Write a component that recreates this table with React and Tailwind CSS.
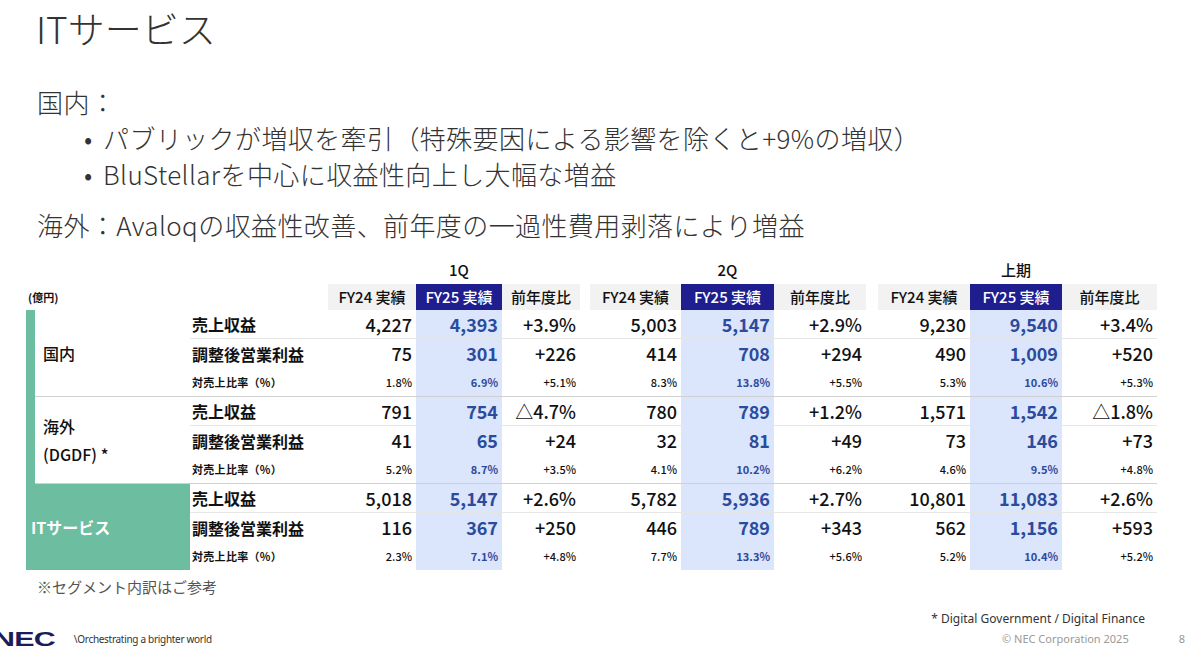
import React from 'react';

const COLS = 'grid grid-cols-[138px_88px_86px_78px_10px_91px_93px_92px_12px_92px_92px_95px]';
const HEAD_COLS = 'grid grid-cols-[164px_138px_88px_86px_78px_10px_91px_93px_92px_12px_92px_92px_95px]';

const sections = [
    {
        label: ['国内'],
        rows: [
            ['売上収益', ['4,227', '4,393', '+3.9%'], ['5,003', '5,147', '+2.9%'], ['9,230', '9,540', '+3.4%']],
            ['調整後営業利益', ['75', '301', '+226'], ['414', '708', '+294'], ['490', '1,009', '+520']],
            ['対売上比率（%）', ['1.8%', '6.9%', '+5.1%'], ['8.3%', '13.8%', '+5.5%'], ['5.3%', '10.6%', '+5.3%']],
        ],
    },
    {
        label: ['海外', '(DGDF) *'],
        rows: [
            ['売上収益', ['791', '754', '△4.7%'], ['780', '789', '+1.2%'], ['1,571', '1,542', '△1.8%']],
            ['調整後営業利益', ['41', '65', '+24'], ['32', '81', '+49'], ['73', '146', '+73']],
            ['対売上比率（%）', ['5.2%', '8.7%', '+3.5%'], ['4.1%', '10.2%', '+6.2%'], ['4.6%', '9.5%', '+4.8%']],
        ],
    },
    {
        label: ['ITサービス'],
        total: true,
        rows: [
            ['売上収益', ['5,018', '5,147', '+2.6%'], ['5,782', '5,936', '+2.7%'], ['10,801', '11,083', '+2.6%']],
            ['調整後営業利益', ['116', '367', '+250'], ['446', '789', '+343'], ['562', '1,156', '+593']],
            ['対売上比率（%）', ['2.3%', '7.1%', '+4.8%'], ['7.7%', '13.3%', '+5.6%'], ['5.2%', '10.4%', '+5.2%']],
        ],
    },
];

function HeadCell({ dark, children }) {
    return (
        <div className={`flex items-center justify-center h-full text-[15px] font-medium ${dark ? 'bg-[#1e1e8f] text-white' : 'bg-[#f2f2f2] text-[#111]'}`}>
            {children}
        </div>
    );
}

function Values({ vals, small }) {
    const size = small ? 'text-[11px]' : 'text-[18px]';
    return (
        <>
            <div className={`flex items-center justify-end pr-[4px] ${size} text-[#111] font-medium`}>{vals[0]}</div>
            <div className={`flex items-center justify-end pr-[4px] ${size} bg-[#dbe5fb] text-[#2b4b9c] font-bold`}>{vals[1]}</div>
            <div className={`flex items-center justify-end pr-[4px] ${size} text-[#111] font-medium`}>{vals[2]}</div>
        </>
    );
}

function Section({ section, last }) {
    return (
        <div className="flex">
            {section.total ? (
                <div className="w-[164px] bg-[#6dbda1] flex items-center pl-[5px] text-white text-[16px] font-bold">
                    {section.label[0]}
                </div>
            ) : (
                <div className="w-[164px] flex">
                    <div className="w-[9px] bg-[#6dbda1]" />
                    <div className="flex-1 flex flex-col justify-center pl-[8px] border-b border-[#d0d0d0] text-[16px] font-medium text-[#111] leading-[28px]">
                        {section.label.map((l) => <div key={l}>{l}</div>)}
                    </div>
                </div>
            )}
            <div className={last ? '' : 'border-b border-[#d0d0d0]'}>
                {section.rows.map((row, i) => {
                    const small = i === 2;
                    return (
                        <div key={i} className={`${COLS} ${small ? 'h-[28px]' : 'h-[29px]'} ${i === 0 ? 'border-b border-[#e6e6e6]' : ''}`}>
                            <div className={`flex items-center pl-[2px] font-bold text-[#111] ${small ? 'text-[11px] tracking-[0.3px]' : 'text-[16px]'}`}>{row[0]}</div>
                            <Values vals={row[1]} small={small} />
                            <div />
                            <Values vals={row[2]} small={small} />
                            <div />
                            <Values vals={row[3]} small={small} />
                        </div>
                    );
                })}
            </div>
        </div>
    );
}

export default function App() {
    return (
        <div className="w-[1200px] h-[655px] bg-white overflow-hidden font-['Noto_Sans_CJK_JP',sans-serif] text-[#333]">
            <h1 className="pl-[36px] pt-[8px] text-[37px] leading-[40px] font-light">ITサービス</h1>

            <div className="pl-[37px] mt-[36px] text-[26px] leading-[36px] font-light tracking-[0.4px]">
                <div>国内：</div>
                <ul className="pl-[47px]">
                    <li className="flex"><span className="w-[19px]">•</span>パブリックが増収を牽引（特殊要因による影響を除くと+9%の増収）</li>
                    <li className="flex"><span className="w-[19px]">•</span>BluStellarを中心に収益性向上し大幅な増益</li>
                </ul>
                <div className="mt-[15px]">海外：Avaloqの収益性改善、前年度の一過性費用剥落により増益</div>
            </div>

            <div className="ml-[26px] mt-[13px]">
                <div className={`${HEAD_COLS} h-[28px] text-[15px] font-medium text-[#111]`}>
                    <div /><div /><div />
                    <div className="flex items-center justify-center">1Q</div>
                    <div /><div /><div />
                    <div className="flex items-center justify-center">2Q</div>
                    <div /><div /><div />
                    <div className="flex items-center justify-center">上期</div>
                    <div />
                </div>
                <div className={`${HEAD_COLS} h-[26px]`}>
                    <div className="flex items-center pl-[2px] text-[11px] font-bold text-[#111]">(億円)</div>
                    <div />
                    <HeadCell>FY24 実績</HeadCell>
                    <HeadCell dark>FY25 実績</HeadCell>
                    <HeadCell>前年度比</HeadCell>
                    <div />
                    <HeadCell>FY24 実績</HeadCell>
                    <HeadCell dark>FY25 実績</HeadCell>
                    <HeadCell>前年度比</HeadCell>
                    <div />
                    <HeadCell>FY24 実績</HeadCell>
                    <HeadCell dark>FY25 実績</HeadCell>
                    <HeadCell>前年度比</HeadCell>
                </div>
                {sections.map((s, i) => (
                    <Section key={i} section={s} last={i === sections.length - 1} />
                ))}
            </div>

            <div className="pl-[37px] mt-[7px] text-[15px] leading-[20px] text-[#555]">※セグメント内訳はご参考</div>

            <div className="flex justify-end pr-[55px] mt-[14px] text-[12px] leading-[16px] text-[#333] font-['Noto_Sans',sans-serif]">
                * Digital Government / Digital Finance
            </div>

            <div className="flex items-center h-[20px] mt-[2px]">
                <span className="inline-block -ml-[7px] text-[21px] leading-[20px] font-black text-[#1c1c5a] font-['Liberation_Sans',sans-serif] scale-x-[1.45] origin-left tracking-[-0.5px]">NEC</span>
                <span className="ml-[38px] text-[10px] text-[#333] font-['Noto_Sans',sans-serif] tracking-[-0.3px]">\Orchestrating a brighter world</span>
                <span className="ml-auto text-[11px] text-[#999] font-['Noto_Sans',sans-serif]">© NEC Corporation 2025</span>
                <span className="ml-[50px] mr-[15px] text-[11px] text-[#999] font-['Noto_Sans',sans-serif]">8</span>
            </div>
        </div>
    );
}
